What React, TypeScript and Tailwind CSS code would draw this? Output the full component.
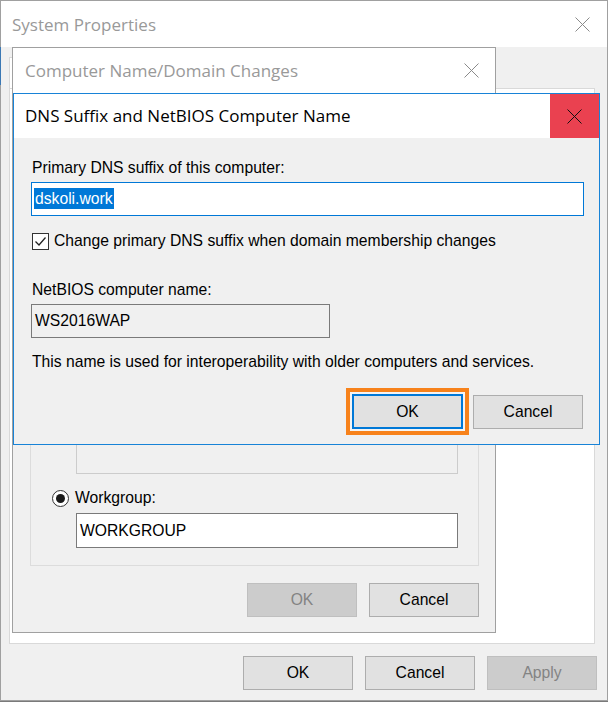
import React from "react";

function XIcon({ color, size = 15 }: { color: string; size?: number }) {
  return (
    <svg width={size} height={size} viewBox="0 0 15 15" aria-hidden="true">
      <path d="M0.5 0.5 L14.5 14.5 M14.5 0.5 L0.5 14.5" stroke={color} strokeWidth="1" fill="none" />
    </svg>
  );
}

function Btn({ children, disabled }: { children: React.ReactNode; disabled?: boolean }) {
  return (
    <div
      className={
        disabled
          ? "flex h-[34px] w-[110px] items-center justify-center border border-[#bfbfbf] bg-[#cccccc] text-[#838383]"
          : "flex h-[34px] w-[110px] items-center justify-center border border-[#adadad] bg-[#e1e1e1] text-black"
      }
    >
      {children}
    </div>
  );
}

function CheckBox() {
  return (
    <div className="flex h-[17px] w-[17px] items-center justify-center border border-[#333333] bg-white">
      <svg width="13" height="13" viewBox="0 0 13 13" aria-hidden="true">
        <path d="M1.5 6.5 L5 10 L11.5 2.5" stroke="#222" strokeWidth="1.3" fill="none" />
      </svg>
    </div>
  );
}

function Radio({ checked }: { checked?: boolean }) {
  return (
    <div className="flex h-[17px] w-[17px] items-center justify-center rounded-full border border-[#333333] bg-white">
      {checked ? <div className="h-[9px] w-[9px] rounded-full bg-[#1a1a1a]" /> : null}
    </div>
  );
}

export default function App() {
  return (
    <div className="relative h-[702px] w-[608px] overflow-hidden bg-[#7a7a7a] font-['Liberation_Sans',Arial,sans-serif] text-[15.7px] text-black">
      {/* System Properties window */}
      <div className="absolute left-0 top-0 flex h-[701px] w-[608px] flex-col border border-[#a0a0a0] bg-[#f0f0f0]">
        <div className="flex h-[46px] shrink-0 items-center justify-between bg-white pl-[11px] pr-[17px]">
          <span className="pt-[1px] font-['Open_Sans',sans-serif] text-[17px] text-[#999999]">System Properties</span>
          <XIcon color="#8a8a8a" />
        </div>
        <div className="flex flex-1 flex-col pl-[8px] pr-[12px] pt-[10px]">
          <div className="flex h-[31px] items-end">
            <div className="h-[31px] w-[120px] border border-b-0 border-[#d9d9d9] bg-white" />
            <div className="h-[28px] w-[90px] border border-b-0 border-[#d9d9d9]" />
            <div className="h-[28px] w-[90px] border border-b-0 border-[#d9d9d9]" />
            <div className="h-[28px] w-[90px] border border-b-0 border-[#d9d9d9]" />
          </div>
          <div className="h-[556px] border border-[#d9d9d9] bg-white" />
          <div className="mr-[-2px] mt-[12px] flex justify-end gap-[12px]">
            <Btn>OK</Btn>
            <Btn>Cancel</Btn>
            <Btn disabled>Apply</Btn>
          </div>
        </div>
      </div>

      {/* small blue strip of the window behind */}
      <div className="absolute left-0 top-[47px] h-[38px] w-[1px] bg-[#3b78b4]" />

      {/* Computer Name/Domain Changes dialog */}
      <div className="absolute left-[12px] top-[47px] flex h-[586px] w-[484px] flex-col border border-[#a0a0a0] bg-[#f0f0f0]">
        <div className="flex h-[45px] shrink-0 items-center justify-between bg-white pl-[12px] pr-[16px]">
          <span className="font-['Open_Sans',sans-serif] text-[17px] text-[#999999]">Computer Name/Domain Changes</span>
          <XIcon color="#8a8a8a" />
        </div>
        <div className="flex flex-1 flex-col justify-end pb-[15px] pl-[17px] pr-[16px]">
          <div className="flex flex-col border border-[#dcdcdc] pb-[17px] pl-[45px] pr-[20px] pt-[10px]">
            <div className="mb-[8px] ml-[-38px]">Member of</div>
            <div className="ml-[-24px] flex items-center gap-[6px]">
              <Radio />
              <span>Domain:</span>
            </div>
            <div className="mt-[5px] h-[34px] border border-[#cccccc] bg-[#f0f0f0]" />
            <div className="ml-[-24px] mt-[14px] flex h-[20px] items-center gap-[6px]">
              <Radio checked />
              <span>Workgroup:</span>
            </div>
            <div className="mt-[5px] flex h-[35px] items-center border border-[#7a7a7a] bg-white pl-[3px]">WORKGROUP</div>
          </div>
          <div className="mt-[17px] flex justify-end gap-[12px]">
            <Btn disabled>OK</Btn>
            <Btn>Cancel</Btn>
          </div>
        </div>
      </div>

      {/* DNS Suffix dialog */}
      <div className="absolute left-[13px] top-[93px] flex h-[352px] w-[587px] flex-col border border-[#1883d7] bg-[#f0f0f0]">
        <div className="flex h-[44px] shrink-0 items-center justify-between bg-white pl-[11px]">
          <span className="font-['Open_Sans',sans-serif] text-[17px] text-black">DNS Suffix and NetBIOS Computer Name</span>
          <div className="flex h-[44px] w-[49px] items-center justify-center bg-[#ea4150]">
            <XIcon color="#111111" />
          </div>
        </div>
        <div className="flex flex-1 flex-col pl-[17px] pr-[15px] pt-[20px]">
          <div className="ml-[1px] leading-[20px]">Primary DNS suffix of this computer:</div>
          <div className="mt-[4px] flex h-[34px] items-center border border-[#0078d7] bg-white pb-[2px] pl-[2px]">
            <span className="bg-[#0078d7] px-[1px] leading-[21px] text-white">dskoli.work</span>
          </div>
          <div className="ml-[1px] mt-[15px] flex h-[20px] items-center gap-[5px]">
            <CheckBox />
            <span className="leading-[20px]">Change primary DNS suffix when domain membership changes</span>
          </div>
          <div className="ml-[1px] mt-[29px] leading-[20px]">NetBIOS computer name:</div>
          <div className="mt-[4px] flex h-[34px] w-[299px] items-center border border-[#7a7a7a] bg-[#f0f0f0] pl-[3px]">WS2016WAP</div>
          <div className="ml-[1px] mt-[14px] leading-[20px]">This name is used for interoperability with older computers and services.</div>
          <div className="mt-[16px] flex items-center justify-end gap-[4px] pr-[1px]">
            <div className="border-[4px] border-[#f7821b] bg-[#f4f4f4] p-[2px]">
              <div className="flex h-[35px] w-[111px] items-center justify-center border-2 border-[#0078d7] bg-[#e1e1e1]">OK</div>
            </div>
            <Btn>Cancel</Btn>
          </div>
        </div>
      </div>
    </div>
  );
}
